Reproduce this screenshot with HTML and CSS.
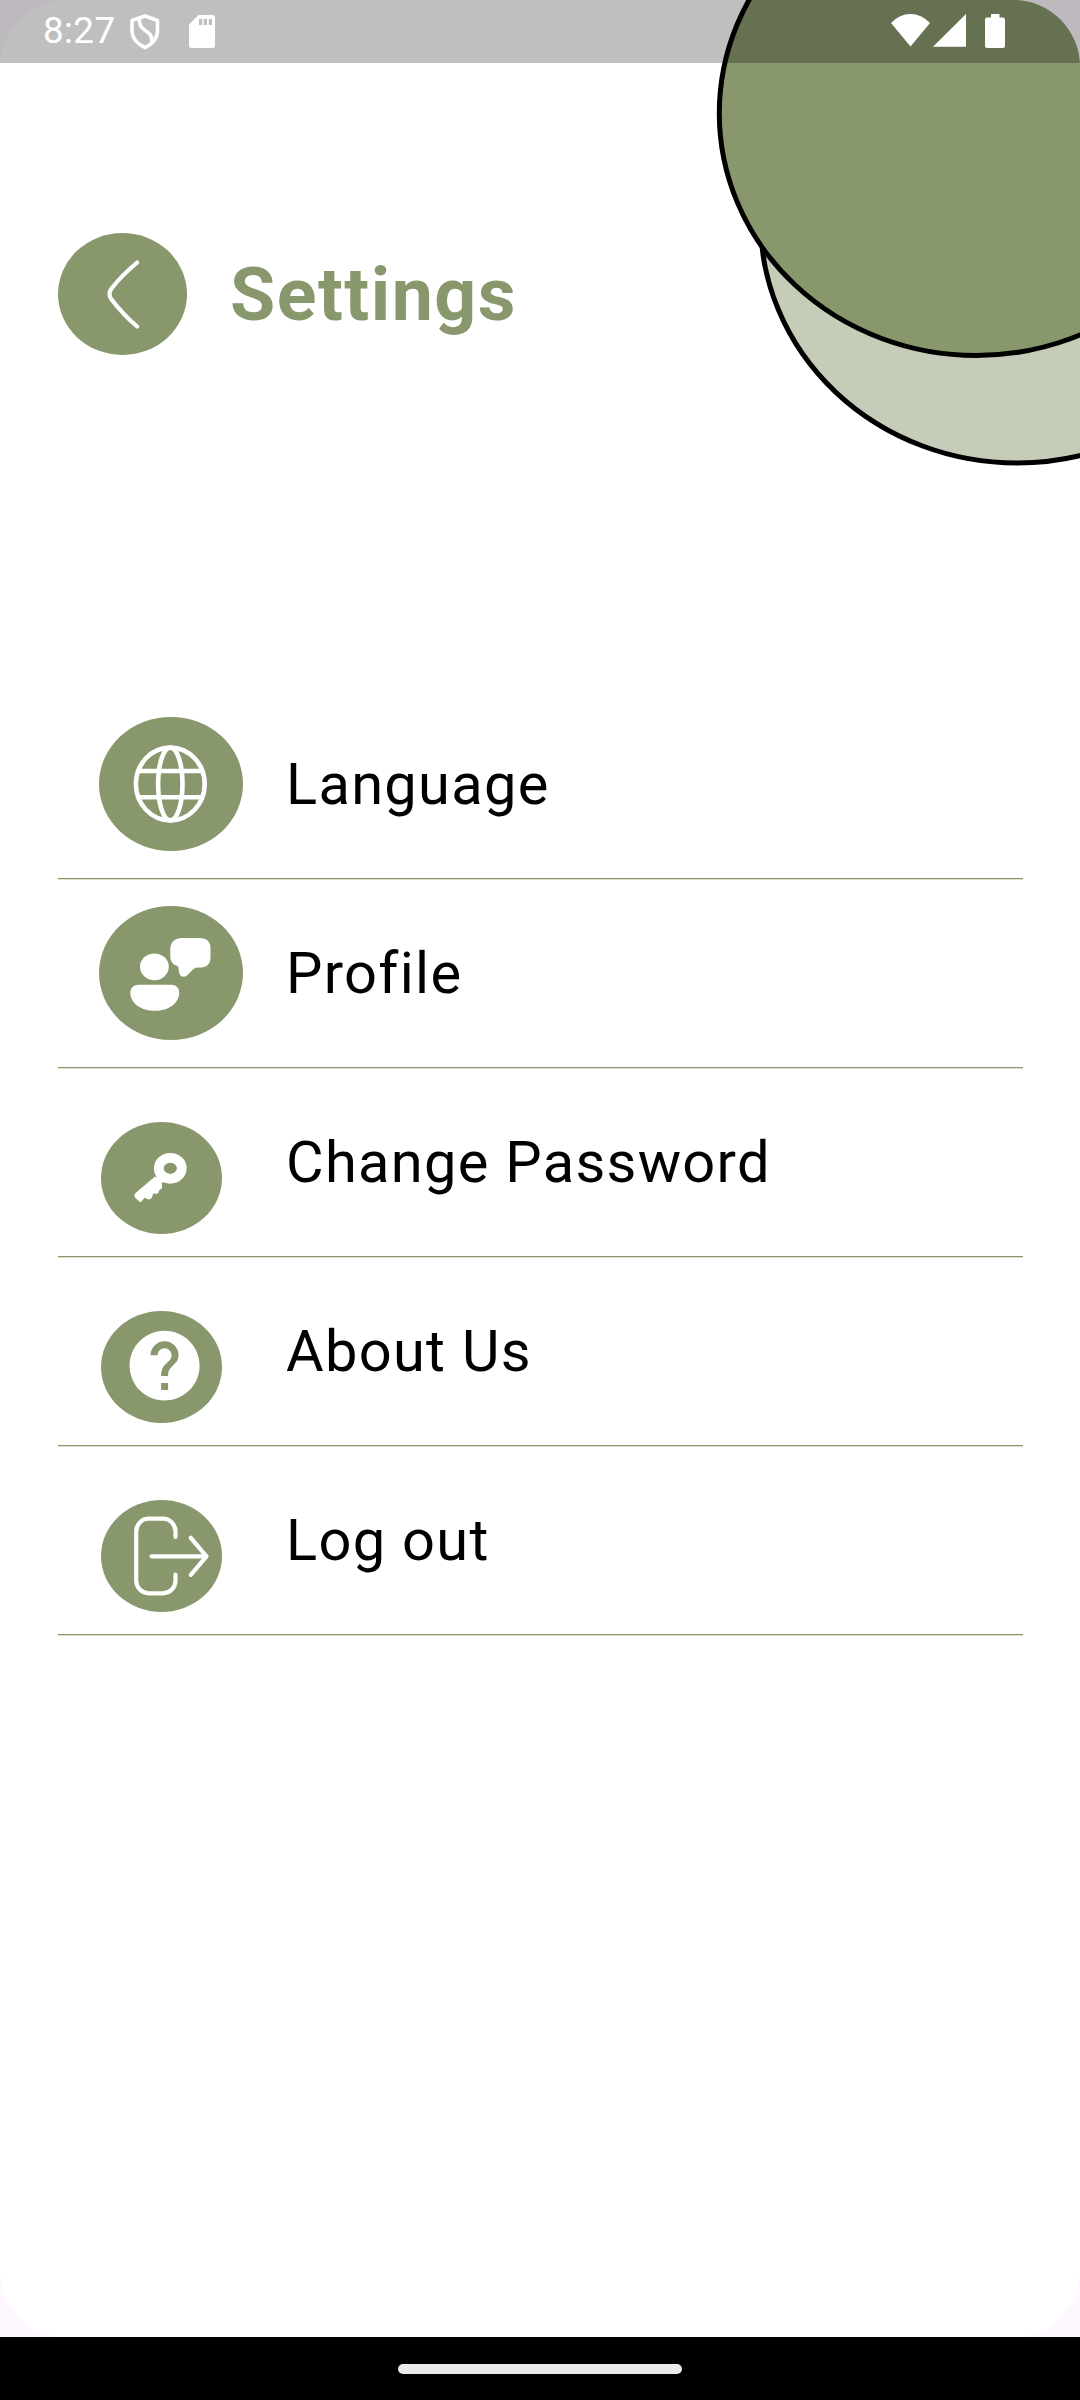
FILE: index.html
```html
<!DOCTYPE html>
<html lang="en">
<head>
<meta charset="utf-8">
<title>Settings</title>
<link rel="stylesheet" href="styles.css">
</head>
<body>
<main class="screen">
  <svg class="blobs" viewBox="0 0 380 480" aria-hidden="true">
    <ellipse class="blob-light" cx="317" cy="221" rx="256.500" ry="242"/>
    <ellipse class="blob-dark" cx="276.300" cy="113.200" rx="257" ry="242.300"/>
  </svg>

  <header class="header">
    <svg class="back" viewBox="0 0 129 122">
      <ellipse class="disc" cx="64.5" cy="61" rx="64.5" ry="61"/>
      <path class="line" stroke-width="4.2" d="M79.200 29.500C69 38 60 47 53.200 56Q49.800 61 53.200 66C60 75 69 85 79.200 93.500"/>
    </svg>
    <h1 class="title">Settings</h1>
  </header>

  <nav class="menu">
    <a class="row">
      <span class="icon"><svg class="large" viewBox="0 0 144 134">
        <ellipse class="disc" cx="72" cy="67" rx="72" ry="67"/>
        <g class="line" stroke-width="4.600">
          <ellipse cx="71.300" cy="67" rx="34.400" ry="36.400"/>
          <ellipse cx="71.300" cy="67" rx="12.200" ry="36.400"/>
          <path d="M40.300 54h62M40.300 80.300h62"/>
        </g>
      </svg></span>
      <span class="label">Language</span>
    </a>
    <a class="row">
      <span class="icon"><svg class="large" viewBox="0 0 144 134">
        <ellipse class="disc" cx="72" cy="67" rx="72" ry="67"/>
        <g class="solid">
          <ellipse cx="55.400" cy="60.800" rx="14.400" ry="13.400"/>
          <path d="M39 78.700H73Q80.200 79.500 80.200 87C80 97 70 104.800 55.800 104.800S31.500 97 31.300 87Q31.300 79.500 39 78.700Z"/>
          <path d="M82 32H101Q111.500 32.500 111.500 42V52Q111 60.500 103 61.500H99Q96 61.500 94 63.500L88 69.500Q84.500 72 81.500 69.500Q79.800 67.500 79.500 61.500L78.500 60Q71.500 58 71.300 51V42Q72 33 82 32Z"/>
        </g>
      </svg></span>
      <span class="label">Profile</span>
    </a>
    <a class="row">
      <span class="icon"><svg class="small" viewBox="0 0 121 112">
        <ellipse class="disc" cx="60.500" cy="56" rx="60.500" ry="56"/>
        <ellipse class="line" stroke-width="9.800" cx="69.300" cy="46.300" rx="11.500" ry="10.500"/>
        <path class="solid" d="M54 54.500L34 71.500Q32.800 73.500 34 75.500L38.500 79.800Q40 80.500 41 79L43.500 75.800L47 77.300Q49.500 78 50.800 75.500L52.300 71.500L55.500 71.700Q57.500 72 58 68.500L60.500 66.500Q62 64.500 60.500 61L66 59Z"/>
      </svg></span>
      <span class="label">Change Password</span>
    </a>
    <a class="row">
      <span class="icon"><svg class="small" viewBox="0 0 121 112">
        <ellipse class="disc" cx="60.500" cy="56" rx="60.500" ry="56"/>
        <path class="solid" transform="translate(21.600 12.900) scale(3.500 3.480)" d="M12 2C6.480 2 2 6.480 2 12s4.480 10 10 10 10-4.480 10-10S17.520 2 12 2zm1 17h-2v-2h2v2zm2.070-7.750l-.9.920C13.450 12.900 13 13.500 13 15h-2v-.5c0-1.100.45-2.100 1.170-2.830l1.240-1.260c.37-.36.59-.86.59-1.410 0-1.100-.9-2-2-2s-2 .9-2 2H8c0-2.210 1.790-4 4-4s4 1.790 4 4c0 .88-.36 1.680-.93 2.250z"/>
      </svg></span>
      <span class="label">About Us</span>
    </a>
    <a class="row">
      <span class="icon"><svg class="small" viewBox="0 0 121 112">
        <ellipse class="disc" cx="60.500" cy="56" rx="60.500" ry="56"/>
        <path class="line" stroke-width="4.200" d="M74.500 37V31.500A12.500 12.800 0 0 0 62 18.700H47.700A12.500 12.800 0 0 0 35.200 31.500V80.500A12.500 12.800 0 0 0 47.700 93.300H62A12.500 12.800 0 0 0 74.500 80.500V74.500M50.500 56.300H105M89.800 37.800L105.500 56.300L89.800 74.800"/>
      </svg></span>
      <span class="label">Log out</span>
    </a>
  </nav>
</main>

<div class="status">
  <span class="time">8:27</span>
  <svg class="shield" viewBox="0 0 30 36">
    <path d="M15 2L27.500 6.500V16C27.500 25 21.500 31 15 33.500C8.500 31 2 25 2 16V6.500Z"/>
    <path d="M9.500 4.500C8.500 20 23.500 14 21.500 28.500"/>
  </svg>
  <svg class="card" viewBox="0 0 26 33">
    <path class="solid" fill-rule="evenodd" d="M9.500 0H23.500Q26 0 26 2.500V30.500Q26 33 23.500 33H2.500Q0 33 0 30.500V9.500ZM10 4V10H13.300V4ZM14.800 4V10H18V4ZM19.700 4V10H23V4Z"/>
  </svg>
  <svg class="signals" viewBox="0 0 115 35">
    <path class="solid" d="M0 9Q8.500 0 19.500 0T39 9L19.500 32.500ZM42 32.800L75 0V32.800ZM100 0H108.500V3.500H112Q114 3.500 114 5.500V32Q114 34 112 34H96Q94 34 94 32V5.500Q94 3.500 96 3.500H100Z"/>
  </svg>
</div>

<footer class="navbar"><span class="pill"></span></footer>
</body>
</html>
```
FILE: styles.css
```css
* { box-sizing: border-box; }

body {
  margin: 0;
  width: 1080px;
  height: 2400px;
  position: relative;
  overflow: hidden;
  background: #fef7ff;
  font-family: Roboto, sans-serif;
}

svg { display: block; flex: none; }

.screen {
  position: relative;
  height: 2337px;
  padding: 232px 58px 0;
  border-radius: 67px;
  overflow: hidden;
  background: #fff;
}

/* decorative overlapping discs behind the status bar */
.blobs {
  position: absolute;
  top: 0;
  right: 0;
  width: 380px;
  height: 480px;
}
.blob-light, .blob-dark { stroke: #000; stroke-width: 5; }
.blob-light { fill: #c5ccb7; }
.blob-dark { fill: #88976c; }

.disc { fill: #88976c; }
.solid { fill: #fff; }
.line {
  fill: none;
  stroke: #fff;
  stroke-linecap: round;
  stroke-linejoin: round;
}

.header {
  display: flex;
  align-items: center;
  gap: 43px;
  height: 123px;
}
.back { width: 129px; height: 122px; }
.title {
  margin: 0;
  padding-top: 2px;
  font-size: 73.5px;
  line-height: 86px;
  font-weight: 700;
  letter-spacing: 1.5px;
  color: #88976c;
}

.menu { margin: 335px -1px 0 0; }
.row {
  display: flex;
  height: 189px;
  padding-left: 41px;
  border-bottom: 1px solid #88976c;
  box-shadow: 0 1px 0 #dde2d0;
}
.icon { width: 187px; }
.large { width: 144px; height: 134px; margin-top: 27px; }
.small { width: 121px; height: 112px; margin: 54px 0 0 2px; }
.label {
  margin-top: 60px;
  font-size: 57.75px;
  line-height: 68px;
  letter-spacing: 1.3125px;
  color: #000;
}

.status {
  position: absolute;
  top: 0;
  left: 0;
  width: 1080px;
  height: 63px;
  padding-left: 43px;
  display: flex;
  align-items: flex-start;
  background: rgba(0, 0, 0, .25);
}
.time {
  width: 87px;
  margin-top: 9px;
  font-size: 36.75px;
  line-height: 43px;
  letter-spacing: .4px;
  color: #fff;
}
.shield {
  width: 30px;
  height: 36px;
  margin-top: 14px;
  fill: none;
  stroke: #fff;
  stroke-width: 3.6;
  stroke-linejoin: round;
}
.card { width: 26px; height: 33px; margin: 15px 0 0 29px; }
.signals { width: 115px; height: 35px; margin: 14px 74px 0 auto; }

.navbar {
  display: flex;
  justify-content: center;
  height: 63px;
  padding-top: 27px;
  background: #000;
}
.pill { width: 284px; height: 10px; border-radius: 5px; background: #ebebeb; }
```
